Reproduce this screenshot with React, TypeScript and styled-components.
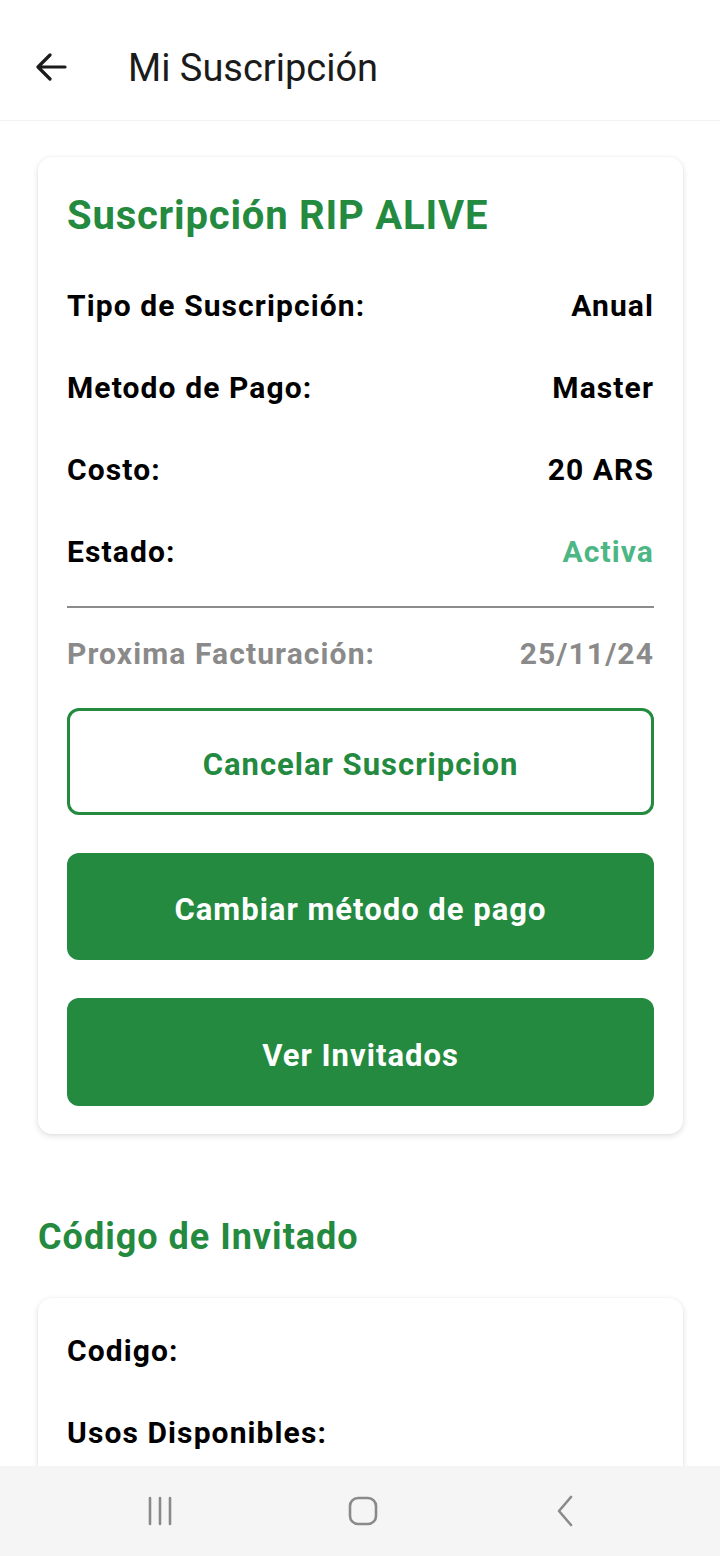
import React from "react";
import styled, { createGlobalStyle } from "styled-components";

const Global = createGlobalStyle`
  html, body { margin: 0; padding: 0; background: #ffffff; }
  body { font-family: Roboto, "Noto Sans", sans-serif; }
  * { box-sizing: border-box; }
`;

const GREEN = "#238a40";

const Screen = styled.div`
  width: 720px;
  height: 1556px;
  display: flex;
  flex-direction: column;
  overflow: hidden;
  background: #fff;
`;

const Header = styled.header`
  height: 121px;
  flex-shrink: 0;
  display: flex;
  align-items: center;
  padding: 20px 0 0 34px;
  border-bottom: 1px solid #f2f2f2;
`;

const BackButton = styled.button`
  width: 34px;
  height: 34px;
  padding: 0;
  border: none;
  background: none;
  display: flex;
  align-items: center;
  justify-content: center;
  margin-right: 60px;
  margin-top: -6px;
`;

const HeaderTitle = styled.h1`
  margin: 0;
  font-size: 38px;
  font-weight: 400;
  color: #1b1b1b;
  margin-top: -4px;
`;

const Content = styled.main`
  flex: 1;
  overflow: hidden;
  padding: 36px 37px 0 38px;
  display: flex;
  flex-direction: column;
`;

const Card = styled.section`
  background: #fff;
  border-radius: 14px;
  box-shadow: 0 2px 6px rgba(0, 0, 0, 0.13), 0 0 2px rgba(0, 0, 0, 0.05);
  padding: 37px 29px 28px 29px;
  display: flex;
  flex-direction: column;
`;

const CardTitle = styled.h2`
  margin: 0 0 26px 0;
  height: 44px;
  line-height: 44px;
  font-size: 40px;
  letter-spacing: 0.8px;
  font-weight: 700;
  color: ${GREEN};
  white-space: nowrap;
`;

const Row = styled.div<{ $muted?: boolean }>`
  height: 82px;
  display: flex;
  align-items: center;
  justify-content: space-between;
  font-size: 30px;
  letter-spacing: 1.1px;
  font-weight: 700;
  color: ${(p) => (p.$muted ? "#8a8a8a" : "#000")};
`;

const Value = styled.span<{ $active?: boolean }>`
  color: ${(p) => (p.$active ? "#4cb684" : "inherit")};
`;

const Divider = styled.hr`
  margin: 14px 0 4px 0;
  border: none;
  height: 2px;
  background: #8c8c8c;
`;

const Button = styled.button<{ $outline?: boolean; $h: number }>`
  height: ${(p) => p.$h}px;
  width: 100%;
  padding: 6px 0 0 0;
  border-radius: 12px;
  font-family: Roboto, "Noto Sans", sans-serif;
  font-size: 31px;
  letter-spacing: 1px;
  font-weight: 700;
  cursor: pointer;
  border: ${(p) => (p.$outline ? `3px solid ${GREEN}` : "none")};
  background: ${(p) => (p.$outline ? "#fff" : GREEN)};
  color: ${(p) => (p.$outline ? GREEN : "#fff")};
`;

const Buttons = styled.div`
  margin-top: 14px;
  display: flex;
  flex-direction: column;
  gap: 38px;
`;

const SectionTitle = styled.h2`
  margin: 83px 0 0 0;
  height: 40px;
  line-height: 40px;
  font-size: 36px;
  letter-spacing: 1px;
  font-weight: 700;
  color: ${GREEN};
`;

const SecondCard = styled(Card)`
  margin-top: 41px;
  padding-top: 11px;
`;

const NavBar = styled.nav`
  height: 90px;
  flex-shrink: 0;
  background: #f5f5f5;
  display: grid;
  grid-template-columns: repeat(3, 202px);
  align-items: center;
  justify-items: center;
  padding: 0 0 0 60px;
`;

const NavIcon = styled.svg`
  display: block;
`;

export default function App() {
  const rows: [string, string, boolean?][] = [
    ["Tipo de Suscripción:", "Anual"],
    ["Metodo de Pago:", "Master"],
    ["Costo:", "20 ARS"],
    ["Estado:", "Activa", true],
  ];
  return (
    <Screen>
      <Global />
      <Header>
        <BackButton aria-label="Volver">
          <svg width="32" height="28" viewBox="0 0 32 28">
            <path
              d="M30 14H4M15 2L3 14l12 12"
              fill="none"
              stroke="#1b1b1b"
              strokeWidth="3.2"
              strokeLinecap="round"
              strokeLinejoin="round"
            />
          </svg>
        </BackButton>
        <HeaderTitle>Mi Suscripción</HeaderTitle>
      </Header>
      <Content>
        <Card>
          <CardTitle>Suscripción RIP ALIVE</CardTitle>
          {rows.map(([k, v, a]) => (
            <Row key={k}>
              <span>{k}</span>
              <Value $active={a}>{v}</Value>
            </Row>
          ))}
          <Divider />
          <Row $muted>
            <span>Proxima Facturación:</span>
            <span>25/11/24</span>
          </Row>
          <Buttons>
            <Button $outline $h={107}>Cancelar Suscripcion</Button>
            <Button $h={107}>Cambiar método de pago</Button>
            <Button $h={108}>Ver Invitados</Button>
          </Buttons>
        </Card>
        <SectionTitle>Código de Invitado</SectionTitle>
        <SecondCard>
          <Row>
            <span>Codigo:</span>
          </Row>
          <Row>
            <span>Usos Disponibles:</span>
          </Row>
        </SecondCard>
      </Content>
      <NavBar>
        <NavIcon width="30" height="32" viewBox="0 0 30 32">
          <path d="M4 3v26M14 3v26M24 3v26" stroke="#8a8a8a" strokeWidth="2.6" strokeLinecap="round" />
        </NavIcon>
        <NavIcon width="32" height="32" viewBox="0 0 32 32">
          <rect x="3" y="3" width="26" height="26" rx="8" fill="none" stroke="#8a8a8a" strokeWidth="2.6" />
        </NavIcon>
        <NavIcon width="20" height="34" viewBox="0 0 20 34">
          <path d="M16 3L4 17l12 14" fill="none" stroke="#8a8a8a" strokeWidth="2.6" strokeLinecap="round" strokeLinejoin="round" />
        </NavIcon>
      </NavBar>
    </Screen>
  );
}
